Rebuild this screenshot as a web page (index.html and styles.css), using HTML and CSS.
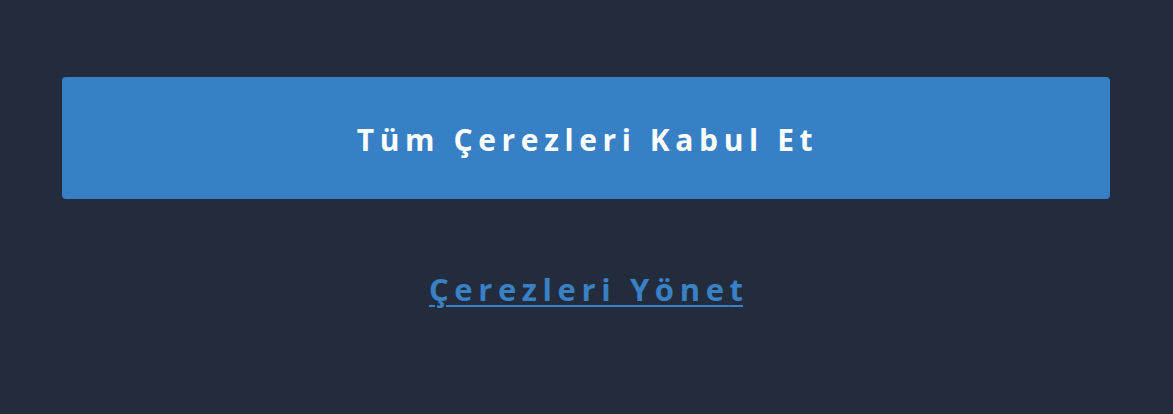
FILE: index.html
```html
<!DOCTYPE html>
<html lang="tr">
<head>
<meta charset="utf-8">
<link rel="stylesheet" href="styles.css">
</head>
<body>
<div class="panel">
  <button class="accept">Tüm Çerezleri Kabul Et</button>
  <a class="manage" href="#">Çerezleri Yöne<span class="last">t</span></a>
</div>
</body>
</html>
```
FILE: styles.css
```css
html, body {
  margin: 0;
  padding: 0;
  background: #222c3c;
  height: 100%;
}
.panel {
  display: flex;
  flex-direction: column;
  align-items: center;
  padding: 77px 63px 0 62px;
  font-family: "Open Sans", "Noto Sans", sans-serif;
}
.accept {
  width: 100%;
  height: 122px;
  padding: 2px 0 0 3px;
  border: none;
  border-radius: 4px;
  background: #3880c5;
  color: #ffffff;
  font-family: inherit;
  font-weight: 700;
  font-size: 30px;
  letter-spacing: 5.6px;
  cursor: pointer;
}
.manage {
  margin-top: 69px;
  color: #3a80c4;
  font-weight: 700;
  font-size: 31px;
  letter-spacing: 5.6px;
  text-decoration: underline;
  text-decoration-thickness: 2px;
  text-underline-offset: 4px;
}
.last {
  letter-spacing: 0;
}
```
